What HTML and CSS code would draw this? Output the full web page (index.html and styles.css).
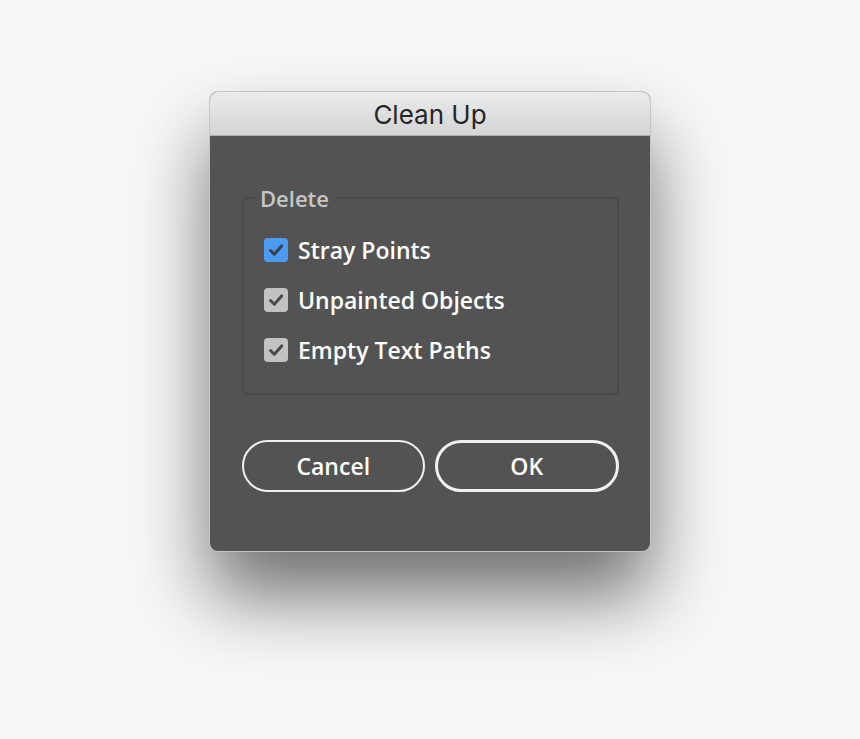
FILE: index.html
```html
<!DOCTYPE html>
<html lang="en">
<head>
    <meta charset="UTF-8">
    <meta name="viewport" content="width=device-width, initial-scale=1.0">
    <title>Clean Up</title>
    <link rel="stylesheet" href="styles.css">
</head>
<body>
    <div class="dialog">
        <div class="titlebar">Clean Up</div>
        <div class="content">
            <fieldset class="group">
                <legend>Delete</legend>
                <label class="option">
                    <span class="box active">
                        <svg viewBox="0 0 24 24" width="24" height="24"><path d="M6.5 12.5l3.8 3.8 7.4-8.4" fill="none" stroke="#3d4147" stroke-width="3" stroke-linecap="round" stroke-linejoin="round"/></svg>
                    </span>
                    Stray Points
                </label>
                <label class="option">
                    <span class="box">
                        <svg viewBox="0 0 24 24" width="24" height="24"><path d="M6.5 12.5l3.8 3.8 7.4-8.4" fill="none" stroke="#4a4a4a" stroke-width="3" stroke-linecap="round" stroke-linejoin="round"/></svg>
                    </span>
                    Unpainted Objects
                </label>
                <label class="option">
                    <span class="box">
                        <svg viewBox="0 0 24 24" width="24" height="24"><path d="M6.5 12.5l3.8 3.8 7.4-8.4" fill="none" stroke="#4a4a4a" stroke-width="3" stroke-linecap="round" stroke-linejoin="round"/></svg>
                    </span>
                    Empty Text Paths
                </label>
            </fieldset>
            <div class="buttons">
                <button class="btn">Cancel</button>
                <button class="btn primary">OK</button>
            </div>
        </div>
    </div>
</body>
</html>
```

FILE: styles.css
```css
body {
    margin: 0;
    background-color: #f7f7f7;
    height: 739px;
    font-family: "Open Sans", "Noto Sans", sans-serif;
}
.dialog {
    width: 440px;
    margin: 0 auto;
    position: relative;
    top: 92px;
    border-radius: 8px;
    overflow: hidden;
    background: #535353;
    box-shadow: 0 0 0 1px #c6c6c6, 0 45px 75px rgba(0, 0, 0, 0.55);
}
.titlebar {
    height: 43px;
    line-height: 46px;
    text-align: center;
    font-family: "Inter", "Liberation Sans", sans-serif;
    font-size: 26px;
    color: #262626;
    background: linear-gradient(#ebebeb, #d4d4d4);
    border-bottom: 1px solid #ababab;
}
.content {
    padding: 47px 31px 59px 32px;
}
.group {
    margin: 0;
    padding: 12px 0 44px 20px;
    border: 2px solid #4a4a4a;
    border-radius: 4px;
    height: 152px;
}
.group legend {
    margin-left: -8px;
    padding: 0 8px 0 4px;
    font-size: 22px;
    font-weight: 600;
    color: #c6c6c6;
}
.option {
    display: flex;
    align-items: center;
    gap: 10px;
    height: 50px;
    font-size: 23px;
    font-weight: 600;
    color: #ffffff;
}
.box {
    width: 24px;
    height: 24px;
    border-radius: 4px;
    background: #c2c2c2;
    display: flex;
}
.box.active {
    background: #4b9bf2;
}
.buttons {
    display: flex;
    gap: 10px;
    margin-top: 45px;
}
.btn {
    flex: 1;
    height: 52px;
    border: 2px solid #f0f0f0;
    border-radius: 26px;
    background: transparent;
    color: #ffffff;
    font-family: "Open Sans", "Noto Sans", sans-serif;
    font-size: 23px;
    font-weight: 600;
}
.btn.primary {
    border-width: 3px;
}
```
